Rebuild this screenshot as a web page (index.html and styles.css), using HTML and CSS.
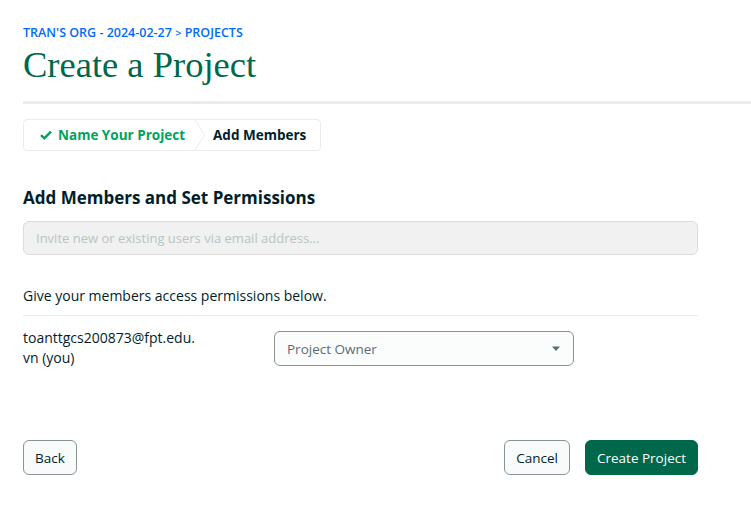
FILE: index.html
```html
<!DOCTYPE html>
<html>
<head>
<meta charset="utf-8">
<link rel="stylesheet" href="styles.css">
</head>
<body>
<header class="page-header">
  <div class="breadcrumb">TRAN'S ORG - 2024-02-27 <span class="crumb-sep">&gt;</span> PROJECTS</div>
  <h1 class="title">Create a Project</h1>
</header>
<div class="header-rule"></div>
<main class="content">
  <nav class="stepper">
    <div class="step done">
      <svg class="check" width="12" height="10" viewBox="0 0 12 10"><path d="M1 5.2 L4.3 8.3 L11 1.6" fill="none" stroke="currentColor" stroke-width="2.4"/></svg>
      Name Your Project
    </div>
    <svg class="chev" width="12" height="32" viewBox="0 0 12 32"><path d="M0.5 0 L10.5 16 L0.5 32" fill="none" stroke="#e8edeb" stroke-width="1"/></svg>
    <div class="step current">Add Members</div>
  </nav>

  <h2 class="section-title">Add Members and Set Permissions</h2>
  <div class="invite-input">Invite new or existing users via email address...</div>

  <p class="hint">Give your members access permissions below.</p>
  <div class="member-row">
    <div class="member-email">toanttgcs200873@fpt.edu.<br>vn (you)</div>
    <div class="select">
      <span>Project Owner</span>
      <svg width="10" height="6" viewBox="0 0 10 6"><path d="M1 0.5 H9 L5 5 Z" fill="#5c6c75"/></svg>
    </div>
  </div>

  <div class="actions">
    <button class="btn">Back</button>
    <div class="actions-right">
      <button class="btn">Cancel</button>
      <button class="btn primary">Create Project</button>
    </div>
  </div>
</main>
</body>
</html>
```

FILE: styles.css
```css
* { box-sizing: border-box; }
body {
  margin: 0;
  font-family: "Open Sans", "Lato", sans-serif;
  color: #001e2b;
  background: #fff;
}
.page-header {
  padding: 26px 0 0 23px;
}
.breadcrumb {
  font-size: 12.5px;
  font-weight: 600;
  color: #016bf8;
  line-height: 14px;
}
.crumb-sep { font-size: 11px; }
.title {
  margin: 5px 0 0 0;
  font-family: "Liberation Serif", "DejaVu Serif", serif;
  font-weight: 400;
  font-size: 36.5px;
  line-height: 40px;
  color: #00684a;
}
.header-rule {
  margin: 16px 0 0 23px;
  height: 3px;
  background: #e8edeb;
}
.content {
  width: 675px;
  margin-left: 23px;
}
.stepper {
  margin-top: 15px;
  display: inline-flex;
  align-items: center;
  height: 32px;
  border: 1px solid #e8edeb;
  border-radius: 4px;
  font-size: 13.5px;
  font-weight: 700;
}
.step {
  display: flex;
  align-items: center;
  gap: 6px;
  padding: 0 9px 0 16px;
}
.step.done { color: #00a35c; }
.step.current { padding: 0 14px 0 7px; color: #001e2b; }
.chev { display: block; }
.section-title {
  margin: 35px 0 0 0;
  font-size: 17px;
  font-weight: 700;
  line-height: 24px;
}
.invite-input {
  margin-top: 11px;
  height: 34px;
  border: 1px solid #dcdcdc;
  border-radius: 6px;
  background: #f1f1f1;
  padding: 0 12px;
  display: flex;
  align-items: center;
  font-size: 13px;
  color: #b8c4c2;
}
.hint {
  margin: 32px 0 0 0;
  font-size: 14px;
  line-height: 18px;
  padding-bottom: 10px;
  border-bottom: 1px solid #e8edeb;
}
.member-row {
  display: flex;
  align-items: flex-start;
  padding-top: 12px;
}
.member-email {
  width: 251px;
  font-size: 14px;
  line-height: 20px;
}
.select {
  margin-top: 3px;
  width: 300px;
  height: 35px;
  border: 1px solid #889397;
  border-radius: 6px;
  background: #fbfcfc;
  display: flex;
  align-items: center;
  justify-content: space-between;
  padding: 0 12px 0 12px;
  font-size: 13.5px;
  color: #5c6c75;
}
.actions {
  margin-top: 72px;
  display: flex;
  justify-content: space-between;
}
.actions-right { display: flex; gap: 15px; }
.btn {
  height: 35px;
  padding: 0 11px;
  border: 1px solid #889397;
  border-radius: 6px;
  background: #f9fbfa;
  font-family: inherit;
  font-size: 13.5px;
  font-weight: 500;
  color: #001e2b;
}
.btn.primary {
  background: #00684a;
  border-color: #00684a;
  color: #fff;
  padding: 0 11px;
}
```
